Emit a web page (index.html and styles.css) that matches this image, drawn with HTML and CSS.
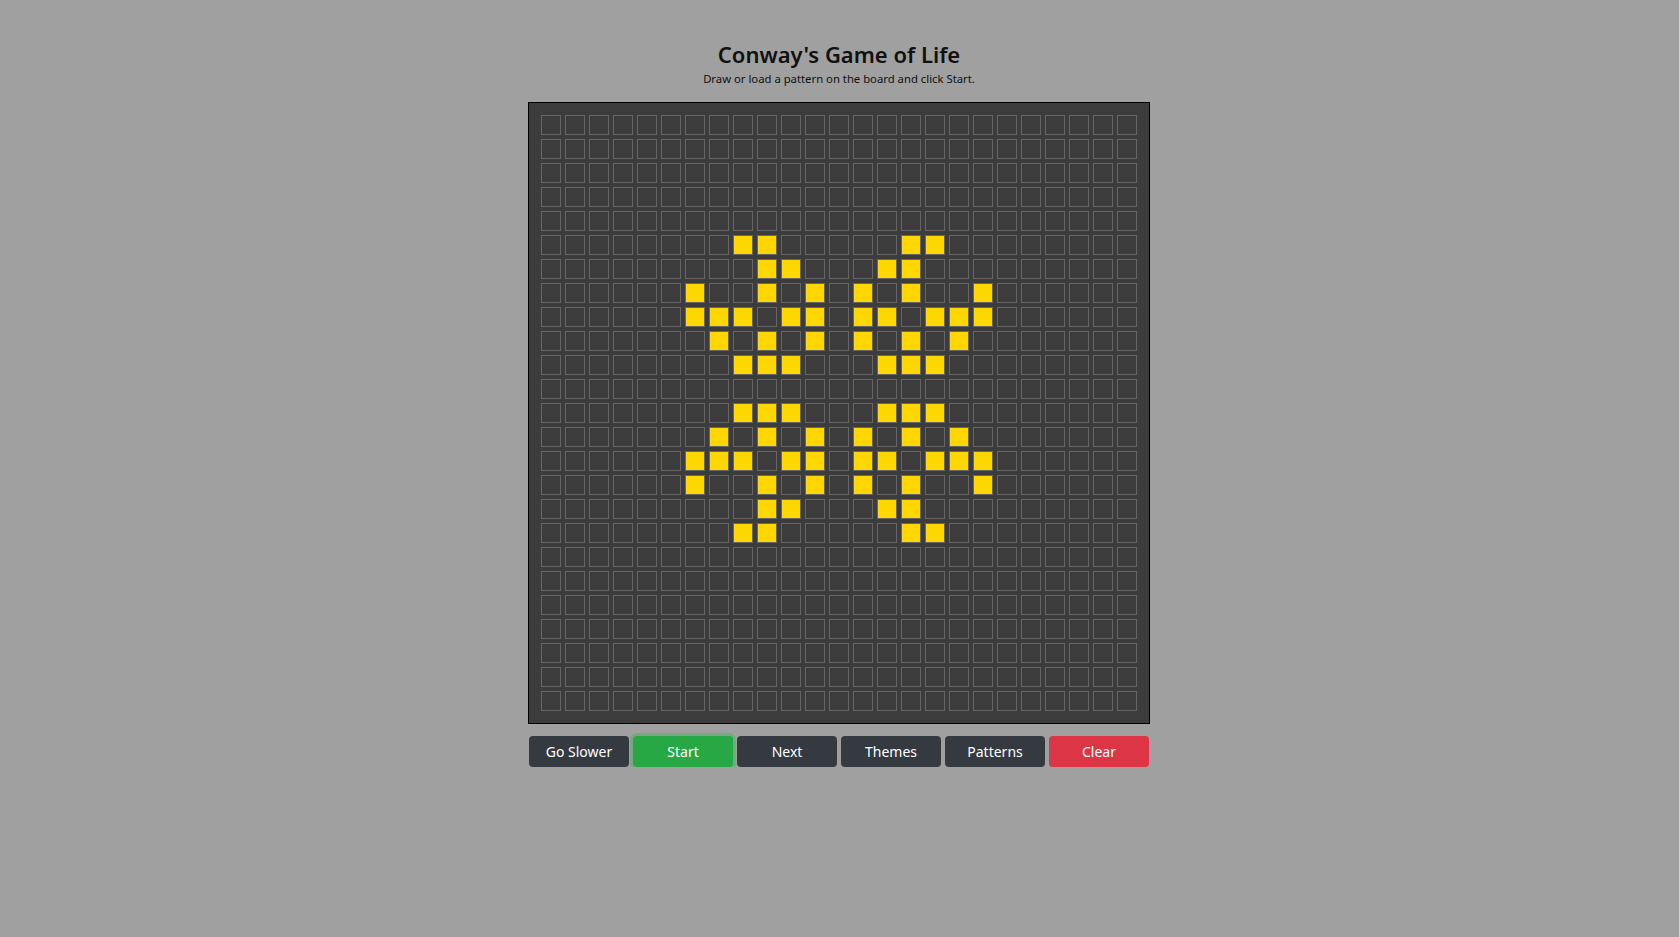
FILE: index.html
```html
<!DOCTYPE html>
<html lang="en">
<head>
<meta charset="utf-8">
<title>Conway's Game of Life</title>
<link rel="stylesheet" href="styles.css">
</head>
<body>
<main class="app">
  <header class="header">
    <h1 class="title">Conway's Game of Life</h1>
    <p class="subtitle">Draw or load a pattern on the board and click Start.</p>
  </header>
  <div class="board" id="board"></div>
  <div class="controls">
    <button class="btn btn-dark">Go Slower</button>
    <button class="btn btn-green">Start</button>
    <button class="btn btn-dark">Next</button>
    <button class="btn btn-dark">Themes</button>
    <button class="btn btn-dark">Patterns</button>
    <button class="btn btn-red">Clear</button>
  </div>
</main>
<script src="app.js"></script>
</body>
</html>
```
FILE: styles.css
```css
html, body {
  margin: 0;
  padding: 0;
}
body {
  background: #a0a0a0;
  font-family: "Noto Sans", "Open Sans", sans-serif;
  color: #111;
}
.app {
  display: flex;
  flex-direction: column;
  align-items: center;
  padding-top: 39px;
  padding-right: 1px;
}
.header {
  text-align: center;
}
.title {
  margin: 0;
  font-size: 22px;
  font-weight: 600;
  line-height: 31px;
}
.subtitle {
  margin: 0 0 14px;
  font-size: 11.3px;
  line-height: 18px;
}
.board {
  display: grid;
  grid-template-columns: repeat(25, 24px);
  grid-auto-rows: 24px;
  padding: 10px;
  background: #3c3c3c;
  border: 1px solid #000;
}
.cell {
  margin: 2px;
  box-sizing: border-box;
  width: 20px;
  height: 20px;
  border: 1px solid #666;
}
.cell.alive {
  background: #ffd700;
}
.controls {
  display: flex;
  gap: 4px;
  width: 620px;
  margin-top: 12px;
}
.btn {
  flex: 1;
  height: 31px;
  border: 0;
  border-radius: 4px;
  font-family: inherit;
  font-size: 14px;
  color: #fff;
  cursor: pointer;
  padding: 0;
}
.btn-dark {
  background: #343a40;
}
.btn-green {
  background: #28a745;
  box-shadow: 0 0 0 3px rgba(72, 180, 97, 0.5);
}
.btn-red {
  background: #dc3545;
}
```
FILE: app.js
```js
var alive = {
  5: [8, 9, 15, 16],
  6: [9, 10, 14, 15],
  7: [6, 9, 11, 13, 15, 18],
  8: [6, 7, 8, 10, 11, 13, 14, 16, 17, 18],
  9: [7, 9, 11, 13, 15, 17],
  10: [8, 9, 10, 14, 15, 16],
  12: [8, 9, 10, 14, 15, 16],
  13: [7, 9, 11, 13, 15, 17],
  14: [6, 7, 8, 10, 11, 13, 14, 16, 17, 18],
  15: [6, 9, 11, 13, 15, 18],
  16: [9, 10, 14, 15],
  17: [8, 9, 15, 16]
};
var board = document.getElementById('board');
for (var r = 0; r < 25; r++) {
  for (var c = 0; c < 25; c++) {
    var d = document.createElement('div');
    d.className = 'cell';
    if (alive[r] && alive[r].indexOf(c) !== -1) d.className += ' alive';
    board.appendChild(d);
  }
}
```
